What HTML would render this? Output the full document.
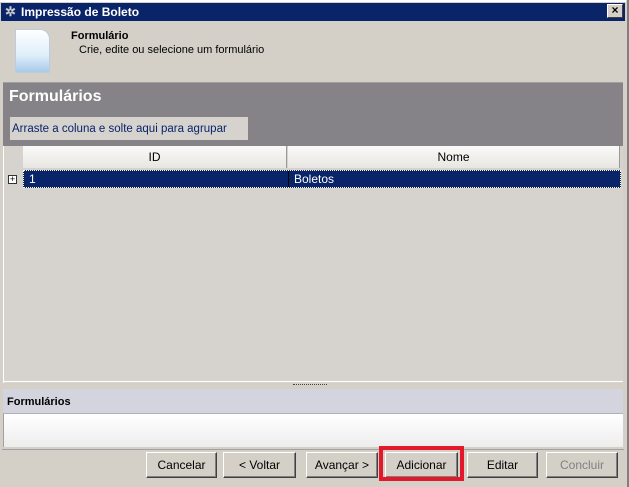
<!DOCTYPE html>
<html><head><style>
*{margin:0;padding:0;box-sizing:border-box}
body{width:629px;height:487px;background:#d4d0c8;font-family:"Liberation Sans",sans-serif;font-size:11px;position:relative;overflow:hidden}
.a{position:absolute}
.btn{position:absolute;top:452px;height:26px;background:#d4d0c8;border:1px solid;border-color:#fff #404040 #404040 #fff;box-shadow:inset -1px -1px 0 #808080;text-align:center;line-height:24px;font-size:12px;color:#000}
</style></head><body>
<div class="a" style="left:0;top:0;width:629px;height:2px;background:#fff"></div>
<div class="a" style="left:626px;top:0;width:3px;height:487px;background:#808080;border-left:1px solid #d4d0c8"></div>
<div class="a" style="left:1px;top:3px;width:624px;height:18px;background:#0a246a;color:#fff;font-weight:bold;font-size:12px;line-height:18px;padding-left:20px">Impressão de Boleto</div>
<div class="a" style="left:5px;top:5px;color:#ccc;font-size:13px;line-height:14px;font-weight:bold">✲</div>
<div class="a" style="left:607px;top:4px;width:16px;height:14px;background:#d4d0c8;border:1px solid;border-color:#fff #404040 #404040 #fff;font-size:12px;line-height:11px;text-align:center;font-weight:bold">×</div>
<div class="a" style="left:15px;top:29px;width:35px;height:44px;background:linear-gradient(#fff,#dfeefa 60%,#a8cbea);border:1px solid #bcd;border-radius:0 10px 0 0"></div>
<div class="a" style="left:71px;top:30px;font-weight:bold;font-size:11px">Formulário</div>
<div class="a" style="left:79px;top:44px;font-size:11px">Crie, edite ou selecione um formulário</div>
<div class="a" style="left:3px;top:82px;width:620px;height:1px;background:#a0a0a0"></div>
<div class="a" style="left:3px;top:83px;width:620px;height:300px;background:#d6d3ce;border-left:1px solid #fff"></div>
<div class="a" style="left:3px;top:83px;width:620px;height:63px;background:#858387"></div>
<div class="a" style="left:9px;top:88px;color:#fff;font-weight:bold;font-size:16px">Formulários</div>
<div class="a" style="left:10px;top:117px;width:238px;height:23px;background:#d6d3ce;color:#0a246a;font-size:11.5px;line-height:24px;padding-left:2px">Arraste a coluna e solte aqui para agrupar</div>
<div class="a" style="left:23px;top:146px;width:264px;height:22px;background:linear-gradient(#fafafa,#e8e6e2);border-right:1px solid #999;text-align:center;line-height:22px;font-size:12px">ID</div>
<div class="a" style="left:288px;top:146px;width:332px;height:22px;background:linear-gradient(#fafafa,#e8e6e2);border-right:1px solid #999;text-align:center;line-height:22px;font-size:12px">Nome</div>
<div class="a" style="left:23px;top:170px;width:598px;height:18px;background:#0a246a;border:1px dotted #ffd;color:#fff;font-size:12px;line-height:16px"><span style="padding-left:5px">1</span><span class="a" style="left:264px;top:0;height:16px;border-left:1px solid #000;padding-left:5px">Boletos</span></div>
<div class="a" style="left:8px;top:175px;width:9px;height:9px;border:1px solid #333;background:#fff;font-size:9px;line-height:7px;text-align:center">+</div>
<div class="a" style="left:3px;top:381px;width:620px;height:1px;background:#fff"></div>
<div class="a" style="left:293px;top:384px;width:34px;height:2px;border-top:1px dotted #444"></div>
<div class="a" style="left:3px;top:389px;width:620px;height:25px;background:#d4d4de;border-bottom:1px solid #b0b0b8;font-weight:bold;line-height:26px;padding-left:4px;font-size:11px">Formulários</div>
<div class="a" style="left:3px;top:414px;width:620px;height:33px;background:linear-gradient(#fff,#ededed);border-left:1px solid #a0a0a0"></div>
<div class="a" style="left:2px;top:449px;width:622px;height:1px;background:#a0a0a0"></div>
<div class="btn" style="left:146px;width:71px">Cancelar</div>
<div class="btn" style="left:223px;width:73px">&lt; Voltar</div>
<div class="btn" style="left:306px;width:72px">Avançar &gt;</div>
<div class="btn" style="left:385px;width:73px">Adicionar</div>
<div class="btn" style="left:467px;width:71px">Editar</div>
<div class="btn" style="left:546px;width:72px;color:#808080">Concluir</div>
<div class="a" style="left:379px;top:446px;width:85px;height:35px;border:4px solid #e3192b"></div>
</body></html>
